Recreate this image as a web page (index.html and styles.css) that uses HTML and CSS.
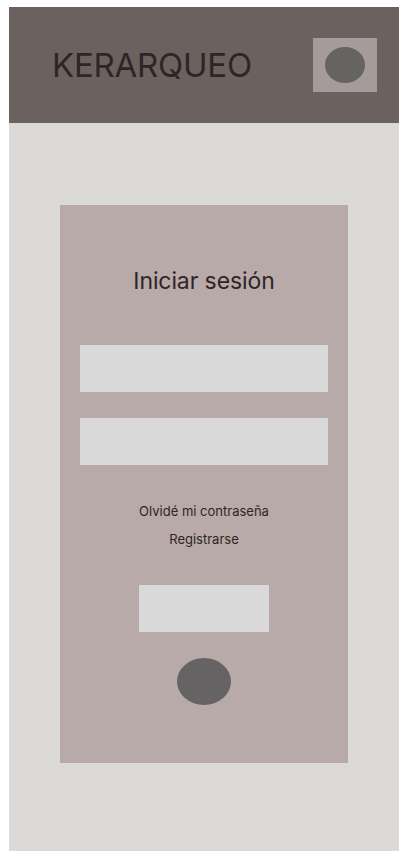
FILE: index.html
```html
<!DOCTYPE html>
<html lang="es">
<head>
<meta charset="utf-8">
<title>KERARQUEO</title>
<link rel="stylesheet" href="styles.css">
</head>
<body>
<div class="screen">
  <header class="header">
    <h1 class="brand">KERARQUEO</h1>
    <div class="profile"><span class="avatar"></span></div>
  </header>
  <main class="card">
    <h2 class="title">Iniciar sesión</h2>
    <div class="field"></div>
    <div class="field"></div>
    <nav class="links">
      <span class="link">Olvidé mi contraseña</span>
      <span class="link">Registrarse</span>
    </nav>
    <div class="button"></div>
    <div class="dot"></div>
  </main>
</div>
</body>
</html>
```
FILE: styles.css
```css
* { box-sizing: border-box; }
body {
  margin: 0;
  background: #fff;
  color: #2f2526;
  font-family: Inter, "Liberation Sans", sans-serif;
}
.screen {
  width: 390px;
  height: 844px;
  margin: 7px 0 0 9px;
  background: #dbdad8;
  overflow: hidden;
}
.header {
  display: flex;
  align-items: center;
  justify-content: space-between;
  height: 116px;
  padding: 0 22px 0 43px;
  background: #6b6260;
}
.brand {
  margin: 0;
  font-size: 33px;
  font-weight: 400;
  letter-spacing: -0.25px;
  line-height: 42px;
}
.profile {
  display: flex;
  align-items: center;
  justify-content: center;
  width: 64px;
  height: 54px;
  background: #a69b9b;
}
.avatar {
  width: 40px;
  height: 36px;
  border-radius: 50%;
  background: #656462;
}
.card {
  display: flex;
  flex-direction: column;
  align-items: center;
  width: 288px;
  height: 558px;
  margin: 82px 0 0 51px;
  padding-top: 61px;
  background: #b7aaa8;
}
.title {
  margin: 0 0 49px;
  font-size: 23px;
  font-weight: 400;
  letter-spacing: -0.1px;
  line-height: 30px;
}
.field {
  width: 248px;
  height: 47px;
  margin-bottom: 26px;
  background: #d9d9d9;
}
.links {
  display: flex;
  flex-direction: column;
  align-items: center;
  gap: 12px;
  margin: 12px 0 38px;
  font-size: 13px;
  line-height: 16px;
}
.button {
  width: 130px;
  height: 47px;
  margin-bottom: 26px;
  background: #d9d9d9;
}
.dot {
  width: 54px;
  height: 47px;
  border-radius: 50%;
  background: #656363;
}
```
